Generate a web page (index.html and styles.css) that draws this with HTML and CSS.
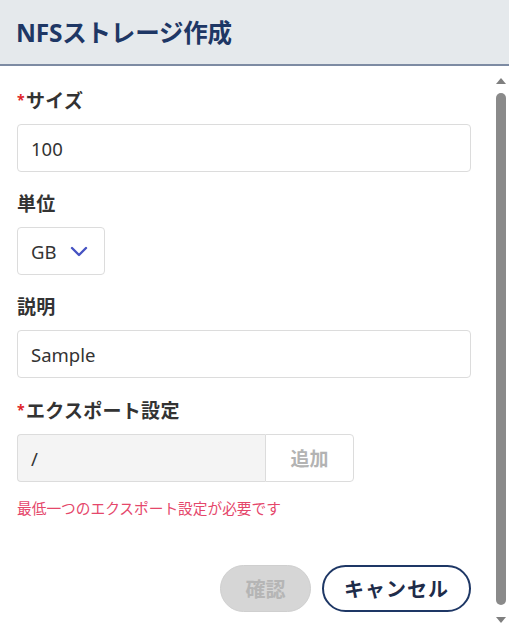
FILE: index.html
```html
<!DOCTYPE html>
<html lang="ja">
<head>
<meta charset="utf-8">
<link rel="stylesheet" href="styles.css">
</head>
<body>
<div class="dialog">
  <header class="header"><h1 class="title">NFSストレージ作成</h1></header>
  <div class="body">
    <div class="content">
      <div class="label"><span class="req">*</span>サイズ</div>
      <div class="input">100</div>
      <div class="label">単位</div>
      <div class="select">GB
        <svg class="chev" width="18" height="11" viewBox="0 0 18 11"><path d="M2 2 L9 9 L16 2" fill="none" stroke="#4653c2" stroke-width="2.4" stroke-linecap="round" stroke-linejoin="round"/></svg>
      </div>
      <div class="label">説明</div>
      <div class="input">Sample</div>
      <div class="label"><span class="req">*</span>エクスポート設定</div>
      <div class="export">
        <div class="export-input">/</div>
        <div class="add-btn">追加</div>
      </div>
      <div class="error">最低一つのエクスポート設定が必要です</div>
      <div class="actions">
        <button class="btn btn-disabled">確認</button>
        <button class="btn btn-cancel">キャンセル</button>
      </div>
    </div>
    <div class="scrollbar">
      <div class="arrow up"></div>
      <div class="thumb"></div>
      <div class="arrow down"></div>
    </div>
  </div>
</div>
</body>
</html>
```
FILE: styles.css
```css
* { box-sizing: border-box; }
html, body { margin: 0; padding: 0; background: #fff; }
body {
  width: 509px; height: 631px; overflow: hidden;
  font-family: "Noto Sans", "Noto Sans CJK JP", sans-serif;
  color: #333;
}
.dialog { display: flex; flex-direction: column; height: 631px; }
.header {
  height: 66px; background: #e5e9ec;
  border-bottom: 2px solid #7d8ba3;
  display: flex; align-items: center; padding-left: 16px;
  flex-shrink: 0;
}
.title {
  margin: 0; font-size: 24.5px; font-weight: 700; color: #1e3765;
  letter-spacing: -0.2px; padding-bottom: 1px;
}
.body { flex: 1; display: flex; min-height: 0; }
.content { flex: 1; padding: 21px 21px 0 17px; display: flex; flex-direction: column; }
.label {
  font-size: 19px; font-weight: 700; line-height: 26px; color: #333;
  margin-bottom: 10px; letter-spacing: 0.3px;
}
.req { color: #e0262b; font-size: 14px; vertical-align: 3px; margin-right: 1px; }
.input {
  height: 48px; border: 1px solid #dcdcdc; border-radius: 4px;
  padding: 0 13px; display: flex; align-items: center;
  font-size: 18.5px; color: #333; margin-bottom: 19px; flex-shrink: 0;
}
.select {
  width: 88px; height: 48px; border: 1px solid #dcdcdc; border-radius: 4px;
  padding: 0 13px; display: flex; align-items: center; gap: 13px;
  font-size: 18.5px; color: #333; margin-bottom: 19px; flex-shrink: 0;
}
.chev { display: block; }
.export { display: flex; height: 48px; width: 337px; flex-shrink: 0; }
.export-input {
  width: 248px; background: #f4f4f4; border: 1px solid #dcdcdc; border-right: none;
  border-radius: 4px 0 0 4px; padding: 0 13px; display: flex; align-items: center;
  font-size: 18.5px; color: #333;
}
.add-btn {
  flex: 1; border: 1px solid #dcdcdc; border-radius: 0 4px 4px 0;
  display: flex; align-items: center; justify-content: center;
  font-size: 19px; font-weight: 700; color: #b3b3b3;
}
.error { margin-top: 16px; font-size: 14.7px; color: #e5476b; line-height: 20px; }
.actions { margin-top: 47px; display: flex; justify-content: flex-end; gap: 11px; }
.btn {
  height: 47px; border-radius: 24px; font-family: inherit; font-size: 20px; font-weight: 700;
  display: flex; align-items: center; justify-content: center; padding: 0;
}
.btn-disabled { width: 91px; background: #d6d6d6; border: 1px solid #cfcfcf; color: #b5b5b5; }
.btn-cancel { width: 149px; background: #fff; border: 2px solid #1e3765; color: #1e2c4a; letter-spacing: 1px; }
.scrollbar {
  width: 17px; display: flex; flex-direction: column; align-items: center;
  padding: 12px 0 8px;
}
.arrow { width: 0; height: 0; border-left: 5px solid transparent; border-right: 5px solid transparent; }
.arrow.up { border-bottom: 6px solid #7f7f7f; }
.arrow.down { border-top: 6px solid #7f7f7f; }
.thumb { width: 10px; flex: 1; background: #8a8a8a; border-radius: 5px; margin: 9px 0 12px; }
```
